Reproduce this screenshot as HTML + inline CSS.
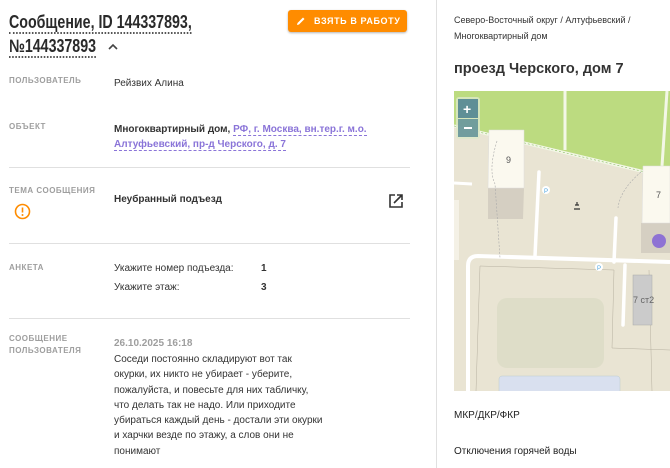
<!DOCTYPE html>
<html><head><meta charset="utf-8"><style>
*{margin:0;padding:0;box-sizing:border-box}
body{width:670px;height:468px;overflow:hidden;background:#fff;font-family:"Liberation Sans","Noto Sans CJK SC",sans-serif;color:#333;position:relative}
.a{position:absolute;white-space:nowrap}
.t{font-size:18px;font-weight:bold;color:#2a2a2a;border-bottom:2px dotted #555;line-height:20px;transform:scaleX(0.79);transform-origin:0 0}
.lb{font-size:8px;font-weight:bold;color:#9e9e9e;letter-spacing:.5px;line-height:19px}
.v{font-size:10px;color:#333}
.hr{position:absolute;left:9px;width:401px;height:1px;background:#e0e0e0}
.lk{color:#8a74d8;border-bottom:1px dashed #8a74d8}
</style></head><body>
<div class="a t" style="left:9px;top:12px">Сообщение, ID 144337893,</div>
<div class="a t" style="left:9px;top:36px">№144337893</div>
<svg class="a" style="left:107px;top:42px" width="12" height="9"><path d="M2 7 L6 3 L10 7" stroke="#444" stroke-width="1.6" fill="none"/></svg>
<div class="a" style="left:288px;top:10px;width:119px;height:22px;background:#ff8c00;border-radius:3px;box-shadow:0 1px 2px rgba(0,0,0,.3);color:#fff;font-size:9px;font-weight:bold;letter-spacing:.6px;line-height:22px;padding-left:26px">ВЗЯТЬ В РАБОТУ</div>
<svg class="a" style="left:295px;top:15px" width="12" height="12"><path d="M2 10 L2.5 8 L8 2.5 L9.5 4 L4 9.5 Z" fill="#fff"/></svg>

<div class="a lb" style="left:9px;top:71px">ПОЛЬЗОВАТЕЛЬ</div>
<div class="a v" style="left:114px;top:78px">Рейзвих Алина</div>
<div class="a lb" style="left:9px;top:117px">ОБЪЕКТ</div>
<div class="a v" style="left:114px;top:122px;line-height:15px;font-weight:bold;white-space:normal;width:270px"><span>Многоквартирный дом,</span> <span class="lk">РФ, г. Москва, вн.тер.г. м.о.</span><br><span class="lk">Алтуфьевский, пр-д Черского, д. 7</span></div>
<div class="hr" style="top:167px"></div>
<div class="a lb" style="left:9px;top:181px">ТЕМА СООБЩЕНИЯ</div>
<svg class="a" style="left:14px;top:203px" width="17" height="17"><circle cx="8.5" cy="8.5" r="7" stroke="#ff8c00" stroke-width="1.6" fill="none"/><path d="M8.5 4.5v5" stroke="#ff8c00" stroke-width="1.6"/><circle cx="8.5" cy="12" r="1" fill="#ff8c00"/></svg>
<div class="a v" style="left:114px;top:194px;font-weight:bold">Неубранный подъезд</div>
<svg class="a" style="left:388px;top:193px" width="16" height="16"><path d="M7 2H2v12h12V9" stroke="#333" stroke-width="1.6" fill="none"/><path d="M6 10L14 2M9 2h5v5" stroke="#333" stroke-width="1.6" fill="none"/></svg>
<div class="hr" style="top:243px"></div>
<div class="a lb" style="left:9px;top:258px">АНКЕТА</div>
<div class="a v" style="left:114px;top:263px">Укажите номер подъезда:</div>
<div class="a v" style="left:261px;top:263px;font-weight:bold">1</div>
<div class="a v" style="left:114px;top:282px">Укажите этаж:</div>
<div class="a v" style="left:261px;top:282px;font-weight:bold">3</div>
<div class="hr" style="top:318px"></div>
<div class="a lb" style="left:9px;top:333px;line-height:12px">СООБЩЕНИЕ<br>ПОЛЬЗОВАТЕЛЯ</div>
<div class="a v" style="left:114px;top:338px;color:#9e9e9e;font-weight:bold">26.10.2025 16:18</div>
<div class="a v" style="left:114px;top:352px;line-height:15.3px;white-space:normal;width:240px">Соседи постоянно складируют вот так<br>окурки, их никто не убирает - уберите,<br>пожалуйста, и повесьте для них табличку,<br>что делать так не надо. Или приходите<br>убираться каждый день - достали эти окурки<br>и харчки везде по этажу, а слов они не<br>понимают</div>

<div class="a" style="left:436px;top:0;width:1px;height:468px;background:#e0e0e0"></div>
<div class="a" style="left:454px;top:12px;font-size:9px;line-height:16px;color:#333">Северо-Восточный округ / Алтуфьевский /<br>Многоквартирный дом</div>
<div class="a" style="left:454px;top:61px;font-size:14.5px;font-weight:bold;color:#333">проезд Черского, дом 7</div>
<svg class="a" style="left:454px;top:91px" width="216" height="300" viewBox="454 91 216 300">
<rect x="454" y="91" width="216" height="300" fill="#e9e4d3"/>
<path d="M454 91H670V170L660 172L645 172L454 126Z" fill="#bcdb80"/>
<path d="M454 126L645 172" stroke="#f3f7e6" stroke-width="3"/>
<path d="M454 126L645 172" stroke="#8cbd6a" stroke-width=".6" stroke-dasharray="2 2"/>
<path d="M565 91V150" stroke="#f3f7e6" stroke-width="3"/>
<path d="M667 91L662 166" stroke="#f3f7e6" stroke-width="3"/>
<path d="M488 188H524L523 219H488Z" fill="#d5cfc2"/>
<path d="M489 130H524V188H488Z" fill="#fbf9ef" stroke="#ddd" stroke-width=".5"/>
<text x="506" y="163" font-size="9" fill="#555" font-family="Liberation Sans">9</text>
<path d="M641 223H670V253H641Z" fill="#d5cfc2"/>
<path d="M643 166H670V223H642Z" fill="#fbf9ef" stroke="#ddd" stroke-width=".5"/>
<text x="656" y="198" font-size="9" fill="#555" font-family="Liberation Sans">7</text>
<circle cx="659" cy="241" r="7" fill="#8e72d4"/>
<path d="M454 183L472 184" stroke="#fff" stroke-width="3"/>
<path d="M539 172L535 256M616 218L614 262M625 265L623 325" stroke="#fff" stroke-width="3.5" stroke-linecap="round"/>
<path d="M468 468V266Q468 256 478 256L670 262" stroke="#fff" stroke-width="4" fill="none"/>
<rect x="454" y="200" width="5" height="60" fill="#f4f1e6"/>
<path d="M480 266L614 270L612 348L670 350M480 266L476 391M649 270L652 391" stroke="#b6b0a0" stroke-width=".5" fill="none"/>
<rect x="497" y="298" width="107" height="70" rx="10" fill="#deddc8"/>
<rect x="499" y="376" width="121" height="20" rx="3" fill="#d9e0ef" stroke="#bcc" stroke-width=".5"/>
<rect x="633" y="275" width="19" height="50" fill="#cbcbcb" stroke="#aaa" stroke-width=".5"/>
<text x="633" y="303" font-size="9" fill="#666" font-family="Liberation Sans">7 ст2</text>
<circle cx="546" cy="190" r="4" fill="#fff"/><text x="544" y="193" font-size="6" fill="#4aa3df" font-family="Liberation Sans">P</text>
<circle cx="599" cy="267" r="4" fill="#fff"/><text x="597" y="270" font-size="6" fill="#4aa3df" font-family="Liberation Sans">P</text>
<path d="M575 205h4M577 202v3M574 209h6" stroke="#333" stroke-width="1.2"/>
<path d="M497 141Q488 170 495 184L500 258M641 172Q620 190 618 208" stroke="#aaa" stroke-width=".6" stroke-dasharray="2 1.5" fill="none"/>
<rect x="456" y="97" width="24" height="42" rx="3" fill="#dce8c9" opacity=".8"/>
<rect x="458" y="99" width="20" height="19" fill="#5f8f96"/>
<rect x="458" y="119" width="20" height="18" fill="#5f8f96" opacity=".85"/>
<text x="463" y="114" font-size="14" font-weight="bold" fill="#fff" font-family="Liberation Sans">+</text>
<path d="M464 128h8" stroke="#fff" stroke-width="2"/>
</svg>
<div class="a" style="left:454px;top:410px;font-size:10px;color:#222">МКР/ДКР/ФКР</div>
<div class="a" style="left:454px;top:446px;font-size:10px;color:#222">Отключения горячей воды</div>
</body></html>
